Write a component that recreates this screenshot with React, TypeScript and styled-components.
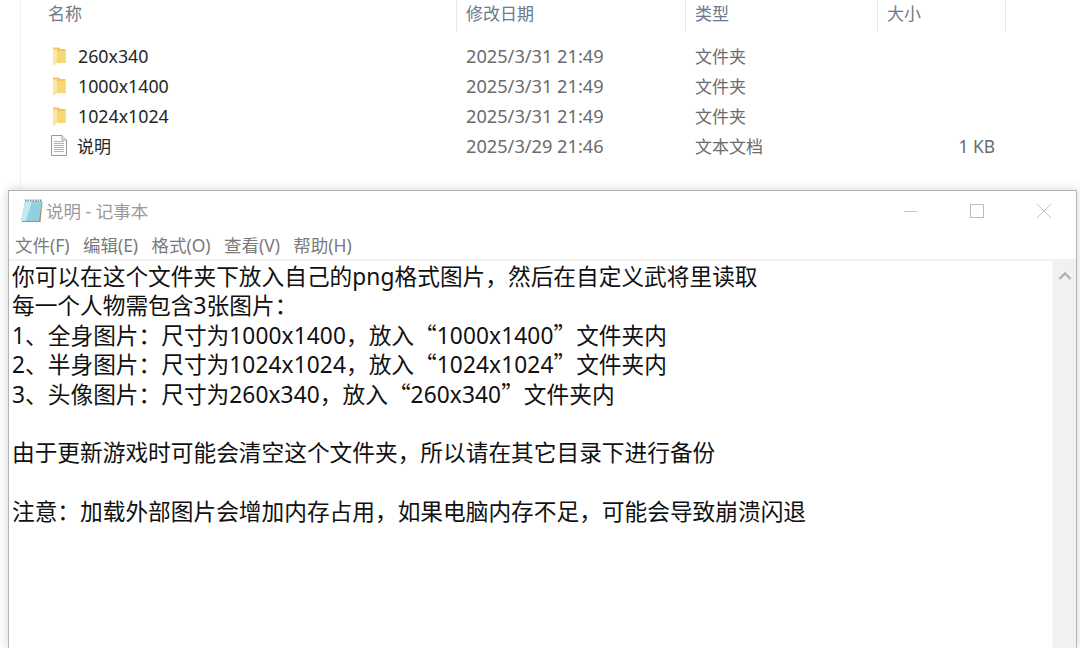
import styled, { createGlobalStyle } from "styled-components";

const GlobalStyle = createGlobalStyle`
  html, body {
    margin: 0;
    padding: 0;
    width: 1080px;
    height: 648px;
    overflow: hidden;
    background: #fff;
    font-family: "Noto Sans", "Noto Sans CJK SC", sans-serif;
  }
`;

const columns = "417px 229px 192px 128px";

const files = [
  { name: "260x340", date: "2025/3/31 21:49", type: "文件夹", size: "", kind: "folder" },
  { name: "1000x1400", date: "2025/3/31 21:49", type: "文件夹", size: "", kind: "folder" },
  { name: "1024x1024", date: "2025/3/31 21:49", type: "文件夹", size: "", kind: "folder" },
  { name: "说明", date: "2025/3/29 21:46", type: "文本文档", size: "1 KB", kind: "file" },
];

const noteLines = [
  "你可以在这个文件夹下放入自己的png格式图片，然后在自定义武将里读取",
  "每一个人物需包含3张图片：",
  "1、全身图片：尺寸为1000x1400，放入“1000x1400”文件夹内",
  "2、半身图片：尺寸为1024x1024，放入“1024x1024”文件夹内",
  "3、头像图片：尺寸为260x340，放入“260x340”文件夹内",
  "",
  "由于更新游戏时可能会清空这个文件夹，所以请在其它目录下进行备份",
  "",
  "注意：加载外部图片会增加内存占用，如果电脑内存不足，可能会导致崩溃闪退",
];

const menus = ["文件(F)", "编辑(E)", "格式(O)", "查看(V)", "帮助(H)"];

function FolderIcon() {
  return (
    <svg width="14" height="20" viewBox="0 0 14 20">
      <path d="M1 1.5 L7 1.5 L8 3 L13.5 3 L13.5 17 L1 17 Z" fill="#f2c55c" />
      <path d="M1 3.5 L5 3 L5 17 L2 19.5 L1 19.5 Z" fill="#fbe6a2" />
      <path d="M5 5 L13.5 5 L13.5 17 L5 17 Z" fill="#f8d775" />
    </svg>
  );
}

function FileIcon() {
  return (
    <svg width="16" height="21" viewBox="0 0 16 21">
      <path d="M.5.5 H11 L15.5 5 V20.5 H.5 Z" fill="#fbfbfb" stroke="#9a9a9a" />
      <path d="M11 .5 V5 H15.5" fill="#e8e8e8" stroke="#a5a5a5" />
      <path d="M3 6.5 H13 M3 8.5 H13 M3 10.5 H13 M3 12.5 H13 M3 14.5 H13 M3 16.5 H13" stroke="#b4b4b4" />
    </svg>
  );
}

function NotepadIcon() {
  return (
    <svg width="23" height="24" viewBox="0 0 23 24">
      <path d="M5 3 H22.5 L20.5 23 H2 Z" fill="#a08f72" />
      <path d="M5 2 H22 L19 22 H1 Z" fill="#93cfe0" />
      <path d="M5 2 H12 L6 22 H1 Z" fill="#c4e8f0" />
      <path d="M5 1.5 H22" stroke="#7f909b" strokeWidth="2" strokeDasharray="1.5 1" />
    </svg>
  );
}

// latin runs and the curly quotes are set apart, the quotes take the full width CJK glyph
function renderNoteLine(line: string) {
  return line.split(/([A-Za-z0-9]+|[“”])/).map((part, index) => {
    if (part === "“" || part === "”") return <Quote key={index}>{part}</Quote>;
    if (/^[A-Za-z0-9]+$/.test(part)) return <LatinRun key={index}>{part}</LatinRun>;
    return part;
  });
}

export default function App() {
  return (
    <>
      <GlobalStyle />
      <Page>
        <Explorer>
          <HeaderRow>
            <HeaderCell>名称</HeaderCell>
            <HeaderCell>修改日期</HeaderCell>
            <HeaderCell>类型</HeaderCell>
            <HeaderCell>大小</HeaderCell>
          </HeaderRow>
          <FileList>
            {files.map((file) => (
              <FileRow key={file.name}>
                <NameCell $cjk={file.kind === "file"}>
                  <IconSlot>{file.kind === "folder" ? <FolderIcon /> : <FileIcon />}</IconSlot>
                  {file.name}
                </NameCell>
                <DetailCell>{file.date}</DetailCell>
                <TypeCell>{file.type}</TypeCell>
                <SizeCell>{file.size}</SizeCell>
              </FileRow>
            ))}
          </FileList>
        </Explorer>
        <Notepad>
          <TitleBar>
            <TitleLabel>
              <NotepadIcon />
              说明 - 记事本
            </TitleLabel>
            <WindowButtons>
              <svg width="16" height="16" viewBox="0 0 16 16">
                <path d="M2 8.5 H15" stroke="#c4c4c4" />
              </svg>
              <svg width="16" height="16" viewBox="0 0 16 16">
                <rect x="1.5" y="1.5" width="13" height="13" fill="none" stroke="#bcbcbc" />
              </svg>
              <svg width="16" height="16" viewBox="0 0 16 16">
                <path d="M1 1 L15 15 M15 1 L1 15" stroke="#c4c4c4" />
              </svg>
            </WindowButtons>
          </TitleBar>
          <MenuBar>
            {menus.map((menu) => (
              <MenuItem key={menu}>{menu}</MenuItem>
            ))}
          </MenuBar>
          <EditorArea>
            <TextBody>
              {noteLines.map((line, index) => (
                <NoteLine key={index}>{renderNoteLine(line)}</NoteLine>
              ))}
            </TextBody>
            <ScrollBar>
              <ScrollArrow>
                <svg width="14" height="10" viewBox="0 0 14 10">
                  <path d="M1.5 8 L7 2.5 L12.5 8" fill="none" stroke="#b0b0b0" strokeWidth="2.4" />
                </svg>
              </ScrollArrow>
            </ScrollBar>
          </EditorArea>
        </Notepad>
      </Page>
    </>
  );
}

const Page = styled.div`
  width: 1080px;
  height: 648px;
  display: flex;
  flex-direction: column;
  overflow: hidden;
  background: #fff;
`;

const Explorer = styled.div`
  height: 190px;
  flex: none;
  margin-left: 20px;
  border-left: 1px solid #f3f3f3;
  box-sizing: border-box;
`;

const HeaderRow = styled.div`
  display: grid;
  grid-template-columns: ${columns};
  height: 32px;
  margin-left: 19px;
`;

const HeaderCell = styled.div`
  border-right: 1px solid #e6e6e6;
  padding-left: 9px;
  font-size: 17px;
  line-height: 28px;
  color: #6d7a8a;
  &:first-child {
    padding-left: 8px;
  }
`;

const FileList = styled.div`
  padding-top: 8.5px;
`;

const FileRow = styled.div`
  display: grid;
  grid-template-columns: ${columns};
  height: 30px;
  margin-left: 19px;
  align-items: center;
`;

const NameCell = styled.div<{ $cjk: boolean }>`
  display: flex;
  align-items: center;
  gap: ${(props) => (props.$cjk ? "10px" : "11px")};
  padding-left: 10px;
  font-size: ${(props) => (props.$cjk ? "17px" : "17.8px")};
  color: #26262a;
`;

const IconSlot = styled.span`
  display: flex;
  width: 17px;
  justify-content: center;
`;

const DetailCell = styled.div`
  padding-left: 9px;
  font-size: 18.2px;
  color: #6b6b6b;
`;

const TypeCell = styled(DetailCell)`
  font-size: 17px;
  margin-bottom: 1px;
`;

const SizeCell = styled(DetailCell)`
  padding: 0 11px 0 0;
  font-size: 17.4px;
  text-align: right;
`;

const Notepad = styled.div`
  flex: 1;
  min-height: 0;
  margin-left: 8px;
  width: 1069px;
  box-sizing: border-box;
  border: 1px solid #b4b4b4;
  border-bottom: none;
  background: #fff;
  box-shadow: 0 0 10px rgba(0, 0, 0, 0.18);
  display: flex;
  flex-direction: column;
`;

const TitleBar = styled.div`
  height: 39px;
  flex: none;
  display: flex;
  align-items: center;
  justify-content: space-between;
  padding: 0 24px 0 11px;
`;

const TitleLabel = styled.div`
  display: flex;
  align-items: center;
  gap: 3px;
  font-size: 17.5px;
  color: #9a9a9a;
`;

const WindowButtons = styled.div`
  display: flex;
  gap: 51px;
`;

const MenuBar = styled.div`
  height: 29px;
  flex: none;
  display: flex;
  gap: 13.3px;
  align-items: center;
  padding-left: 6px;
  font-size: 17.5px;
  color: #7a7a7a;
`;

const MenuItem = styled.span`
  white-space: nowrap;
`;

const EditorArea = styled.div`
  flex: 1;
  min-height: 0;
  display: flex;
  border-top: 2px solid #f1f1f1;
`;

const TextBody = styled.div`
  flex: 1;
  padding: 1px 0 0 3px;
`;

const NoteLine = styled.div`
  height: 29.4px;
  font-size: 22.7px;
  line-height: 29.4px;
  color: #111;
  white-space: nowrap;
`;

const LatinRun = styled.span`
  letter-spacing: 0.1px;
`;

const Quote = styled.span`
  font-family: "Noto Sans CJK SC", sans-serif;
  line-height: 0;
`;

const ScrollBar = styled.div`
  width: 24px;
  background: #f1f1f1;
  border-left: 1px solid #f6f6f6;
  box-sizing: border-box;
`;

const ScrollArrow = styled.div`
  height: 30px;
  display: flex;
  align-items: center;
  justify-content: center;
`;
